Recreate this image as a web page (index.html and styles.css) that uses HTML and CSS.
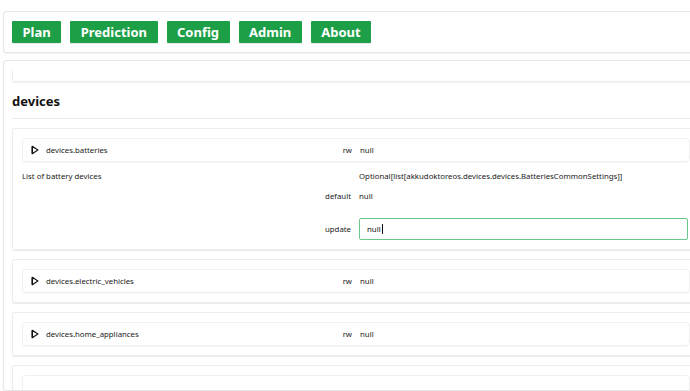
FILE: index.html
```html
<!DOCTYPE html>
<html>
<head>
<meta charset="utf-8">
<link rel="stylesheet" href="styles.css">
</head>
<body>
<div class="page">
  <nav class="card nav">
    <button class="btn">Plan</button>
    <button class="btn">Prediction</button>
    <button class="btn">Config</button>
    <button class="btn">Admin</button>
    <button class="btn">About</button>
  </nav>
  <main class="card main">
    <div class="topbox"></div>
    <h2 class="title">devices</h2>
    <section class="item">
      <div class="summary">
        <span class="name"><svg class="tri" width="8" height="10" viewBox="0 0 8 10"><path d="M1.3 1.2 L6.9 5 L1.3 8.8 Z" fill="none" stroke="#111" stroke-width="1.1" stroke-linejoin="round"/><path d="M1.3 1.2 V8.8" stroke="#111" stroke-width="1.5"/></svg>devices.batteries</span>
        <span class="lab">rw</span>
        <span class="val">null</span>
      </div>
      <div class="grid">
        <span class="desc">List of battery devices</span>
        <span class="val">Optional[list[akkudoktoreos.devices.devices.BatteriesCommonSettings]]</span>
        <span class="lab">default</span>
        <span class="val">null</span>
        <span class="lab inrow">update</span>
        <span class="inputwrap inrow"><span class="input">null<span class="caret"></span></span></span>
      </div>
    </section>
    <section class="item">
      <div class="summary">
        <span class="name"><svg class="tri" width="8" height="10" viewBox="0 0 8 10"><path d="M1.3 1.2 L6.9 5 L1.3 8.8 Z" fill="none" stroke="#111" stroke-width="1.1" stroke-linejoin="round"/><path d="M1.3 1.2 V8.8" stroke="#111" stroke-width="1.5"/></svg>devices.electric_vehicles</span>
        <span class="lab">rw</span>
        <span class="val">null</span>
      </div>
    </section>
    <section class="item">
      <div class="summary">
        <span class="name"><svg class="tri" width="8" height="10" viewBox="0 0 8 10"><path d="M1.3 1.2 L6.9 5 L1.3 8.8 Z" fill="none" stroke="#111" stroke-width="1.1" stroke-linejoin="round"/><path d="M1.3 1.2 V8.8" stroke="#111" stroke-width="1.5"/></svg>devices.home_appliances</span>
        <span class="lab">rw</span>
        <span class="val">null</span>
      </div>
    </section>
    <section class="item last">
      <div class="summary"></div>
    </section>
  </main>
</div>
</body>
</html>
```
FILE: styles.css
```css
html, body {
  margin: 0;
  background: #fff;
  overflow: hidden;
}
body {
  font-family: "Noto Sans", "Open Sans", sans-serif;
  color: #1a1a1a;
}
.page {
  width: 706px;
  padding: 11px 0 0 3px;
}
.card {
  border: 1px solid #e7e7e7;
  border-radius: 3px;
  box-shadow: 0 1px 1px rgba(0,0,0,0.06);
  background: #fff;
}
.nav {
  display: flex;
  gap: 9px;
  padding: 9px 8px 9px;
}
.btn {
  font-family: "Noto Sans", sans-serif;
  font-weight: 700;
  font-size: 13px;
  color: #fff;
  background: #1d9f48;
  border: none;
  border-radius: 1px;
  height: 22px;
  padding: 0 10.5px;
  line-height: 22px;
  box-shadow: 0 1px 0 rgba(0,0,0,0.08);
}
.main {
  margin-top: 7px;
  padding: 9px 8px 0;
  height: 320px;
  overflow: hidden;
}
.topbox {
  height: 11px;
  border: 1px solid #ececec;
  border-top: none;
  border-radius: 2px;
  box-shadow: 0 1px 1px rgba(0,0,0,0.05);
}
.title {
  margin: 0;
  padding: 12px 0 9px;
  font-size: 13px;
  font-weight: 700;
  line-height: 15px;
  color: #111;
  border-bottom: 1px solid #ececec;
  margin-bottom: 9px;
}
.item {
  border: 1px solid #ececec;
  border-radius: 2px;
  box-shadow: 0 1px 1px rgba(0,0,0,0.08);
  padding: 9px 9px;
  margin-bottom: 9px;
  font-size: 7.8px;
}
.summary {
  display: grid;
  grid-template-columns: 300px 29px 1fr;
  align-items: center;
  height: 24px;
  box-sizing: border-box;
  border: 1px solid #f0f0f0;
  border-radius: 4px;
  box-shadow: 0 1px 1px rgba(0,0,0,0.03);
  padding: 0 8px;
}
.name {
  display: flex;
  align-items: center;
  gap: 7px;
}
.tri {
  display: block;
}
.lab {
  text-align: right;
  padding-right: 8px;
}
.grid {
  display: grid;
  grid-template-columns: 337px 1fr;
  padding-top: 4px;
}
.grid > span {
  height: 20px;
  display: flex;
  align-items: center;
}
.grid .lab {
  justify-content: flex-end;
}
.grid > .inrow {
  margin-top: 12px;
  height: 22px;
}
.input {
  display: flex;
  align-items: center;
  width: 100%;
  height: 22px;
  box-sizing: border-box;
  border: 1px solid #6cc78c;
  border-radius: 2px;
  padding-left: 7px;
  font-size: 7.8px;
  color: #111;
  margin-right: 2px;
}
.caret {
  display: inline-block;
  width: 1px;
  height: 10px;
  background: #111;
  margin-left: 1px;
}
.last {
  padding-bottom: 0;
}
```
